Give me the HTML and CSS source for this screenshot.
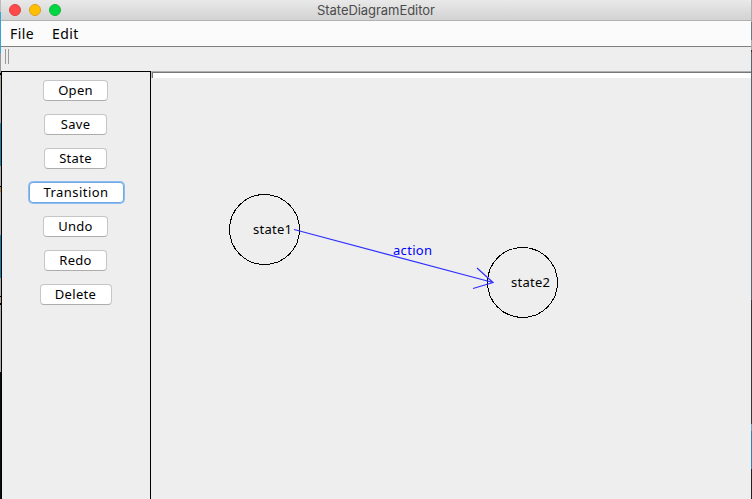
FILE: index.html
```html
<!DOCTYPE html>
<html lang="en">
<head>
<meta charset="utf-8">
<title>StateDiagramEditor</title>
<link rel="stylesheet" href="styles.css">
</head>
<body>
<div class="desktop">
  <div class="edge edge-left"></div>
  <div class="window">
    <header class="titlebar">
      <div class="lights"><i class="light close"></i><i class="light minimize"></i><i class="light maximize"></i></div>
      <h1 class="title">StateDiagramEditor</h1>
    </header>
    <nav class="menubar"><span class="menu-file">File</span><span class="menu-edit">Edit</span></nav>
    <div class="toolbar"><i class="grip"></i></div>
    <main class="workspace">
      <aside class="sidebar">
        <button class="btn w65 open">Open</button>
        <button class="btn w63 save">Save</button>
        <button class="btn w63 state">State</button>
        <button class="btn w97 focused">Transition</button>
        <button class="btn w65 undo">Undo</button>
        <button class="btn w63 redo">Redo</button>
        <button class="btn w72 delete">Delete</button>
      </aside>
      <section class="canvas">
        <div class="canvas-head"></div>
        <svg class="diagram" width="600" height="421" viewBox="151 78 600 421">
          <g class="node" shape-rendering="crispEdges">
            <circle cx="264.5" cy="229.5" r="35"/>
            <circle cx="522.5" cy="282.5" r="35"/>
          </g>
          <text class="label" x="253" y="234" textLength="39">state1</text>
          <text class="label" x="511" y="287" textLength="39">state2</text>
          <path class="edge-line" d="M294 229.5L493 282.5M477 268L493 282.5L473 288.5"/>
          <text class="action" x="393" y="255" textLength="39">action</text>
        </svg>
      </section>
    </main>
  </div>
  <div class="edge edge-right"></div>
</div>
</body>
</html>
```
FILE: styles.css
```css
* { box-sizing: border-box; }
body { margin: 0; overflow: hidden; background: #eee; font-family: "Noto Sans", "Open Sans", sans-serif; color: #000; }
.desktop { display: flex; width: 752px; height: 499px; }
.edge { width: 1px; flex: none; }
.edge-left { background: linear-gradient(#bbb 0 12px, #35a4cf 12px 53px, #999 53px 73px, #000 73px 75px, #a6a294 75px 90px, #aaa 90px 123px, #1785ae 123px 166px, #aaa 166px 186px, #000 186px 187px, #b58b3c 187px 192px, #aaa 192px 235px, #1683af 235px 278px, #aaa 278px 296px, #000 296px 297px, #b9a392 297px 303px, #000 303px 305px, #aaa 305px 372px, #06110f 372px); }
.edge-right { background: linear-gradient(#aaa 0 22px, #6c7780 22px 40px, #aaa 40px 50px, #333 50px 52px, #59656c 52px 300px, #30363a 300px 424px, #6aa2bd 424px 431px, #3182ae 431px 469px, #1d2224 469px); }
.window { width: 750px; display: flex; flex-direction: column; }
.titlebar { height: 21px; display: flex; align-items: center; background: linear-gradient(#e9e9e9, #d2d2d2); border-bottom: 1px solid #b1b1b1; border-radius: 4px 4px 0 0; }
.lights { display: flex; gap: 8px; width: 52px; margin-left: 8px; }
.light { width: 12px; height: 12px; border-radius: 50%; border: 1px solid; }
.close { background: #ff4a49; border-color: #e33e3d; }
.minimize { background: #ffbf00; border-color: #dfa01b; }
.maximize { background: #00d742; border-color: #12b83c; }
.title { margin: 0 0 0 256px; font: 13px/20px Inter, sans-serif; letter-spacing: -0.05px; color: #4b4b4b; }
.menubar { height: 26px; display: flex; gap: 18px; padding-left: 9px; background: #fbfbfb; border-bottom: 1px solid #808080; font-size: 14px; line-height: 26px; letter-spacing: .4px; }
.toolbar { height: 24px; padding: 2px 0 0 4px; background: #eee; }
.grip { display: block; width: 4px; height: 15px; border: solid #999; border-width: 0 1px; }
.workspace { flex: 1; display: flex; }
.sidebar { width: 150px; display: flex; flex-direction: column; align-items: center; gap: 13px; padding: 8px 1px 0 0; background: #eee; border: 1px solid #000; border-bottom: 0; }
.btn { height: 21px; flex: none; padding: 0 0 1px; border: 1px solid #c6c6c6; border-bottom-color: #adadad; border-radius: 4px; background: #fff; font: 13px/18px "Noto Sans", "Open Sans", sans-serif; letter-spacing: .3px; color: #000; white-space: nowrap; }
.w65 { width: 65px; }
.w63 { width: 63px; }
.w72 { width: 72px; }
.w97 { width: 95px; margin-left: 1px; }
.focused { border-color: #71a9e8; box-shadow: 0 0 0 1px #8dbcf0; letter-spacing: .45px; }
.canvas { flex: 1; min-width: 0; background: #eee; }
.canvas-head { height: 7px; background: #fff; border-top: 1px solid #b0b0b0; border-left: 1px solid #c0c0c0; box-shadow: inset 1px 1px #777; }
.diagram { display: block; }
.node circle { fill: none; stroke: #000; stroke-width: 1; }
.label { font-size: 13px; fill: #000; }
.edge-line { fill: none; stroke: #3030ff; stroke-width: 1.25; }
.action { font-size: 13px; fill: #00f; }
```
